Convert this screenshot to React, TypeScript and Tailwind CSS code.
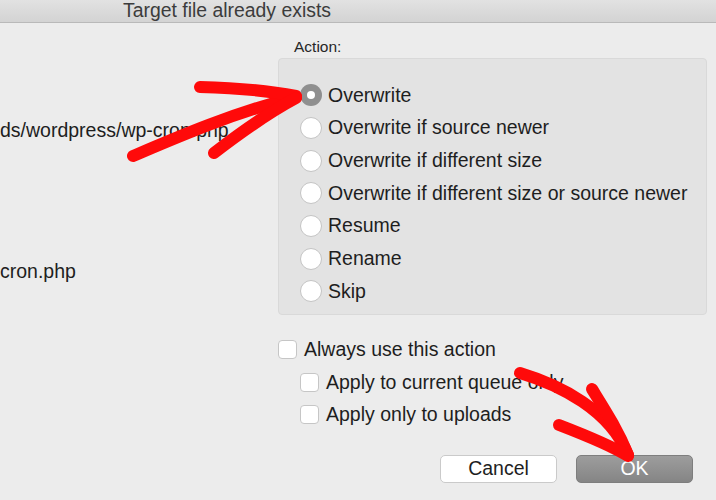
import React from "react";

const OPTIONS = [
  "Overwrite",
  "Overwrite if source newer",
  "Overwrite if different size",
  "Overwrite if different size or source newer",
  "Resume",
  "Rename",
  "Skip",
];

function Radio({ checked }: { checked: boolean }) {
  return checked ? (
    <span className="w-[22px] h-[22px] rounded-full bg-[#8f8f8f] flex items-center justify-center shrink-0">
      <span className="w-[8px] h-[8px] rounded-full bg-white" />
    </span>
  ) : (
    <span className="w-[22px] h-[22px] rounded-full bg-white border border-[#c4c4c4] shrink-0" />
  );
}

function Checkbox() {
  return <span className="w-[19px] h-[19px] rounded-[4px] bg-white border border-[#c6c6c6] shrink-0" />;
}

export default function App() {
  return (
    <div
      className="relative w-[716px] h-[500px] overflow-hidden bg-[#ececec] text-[#1e1e1e]"
      style={{ fontFamily: '"Liberation Sans", Arial, sans-serif' }}
    >
      {/* Title bar */}
      <div className="h-[23px] bg-gradient-to-b from-[#e2e2e2] to-[#d3d3d3] border-b border-[#b9b9b9] pl-[123px] flex items-center">
        <span className="text-[19.4px] leading-none text-[#3c3c3c]">Target file already exists</span>
      </div>

      <div className="flex">
        {/* Left column: file details (cropped) */}
        <div className="w-[278px] shrink-0 flex flex-col text-[19.5px] leading-none">
          <div className="mt-[98px]">ds/wordpress/wp-cron.php</div>
          <div className="mt-[121px]">cron.php</div>
        </div>

        {/* Right column */}
        <div className="w-[429px] flex flex-col">
          <div className="pl-[16px] pt-[16px] h-[35px] text-[15.5px] leading-none text-[#262626]">Action:</div>
          <div className="h-[257px] rounded-[4px] bg-[#e3e3e3] border border-[#d9d9d9] pl-[21px] pt-[20px] flex flex-col">
            {OPTIONS.map((o, i) => (
              <div key={o} className="h-[32.7px] flex items-center gap-[6px]">
                <Radio checked={i === 0} />
                <span className="text-[19.5px] leading-none">{o}</span>
              </div>
            ))}
          </div>

          <div className="mt-[25px] flex items-center gap-[7px] h-[19px]">
            <Checkbox />
            <span className="text-[19.5px] leading-none">Always use this action</span>
          </div>
          <div className="mt-[14px] pl-[22px] flex items-center gap-[7px] h-[19px]">
            <Checkbox />
            <span className="text-[19.5px] leading-none">Apply to current queue only</span>
          </div>
          <div className="mt-[13px] pl-[22px] flex items-center gap-[7px] h-[19px]">
            <Checkbox />
            <span className="text-[19.5px] leading-none">Apply only to uploads</span>
          </div>

          <div className="mt-[31px] pr-[14px] flex justify-end gap-[19px]">
            <button className="w-[117px] h-[28px] rounded-[5px] bg-white border border-[#cacaca] text-[19.5px] leading-none text-[#1e1e1e]">
              Cancel
            </button>
            <button className="w-[117px] h-[28px] rounded-[5px] bg-gradient-to-b from-[#9d9d9d] to-[#858585] border border-[#7e7e7e] text-[19.5px] leading-none text-white">
              OK
            </button>
          </div>
        </div>
      </div>

      {/* Red annotation arrows */}
      <svg className="absolute inset-0 pointer-events-none" width="716" height="500" viewBox="0 0 716 500">
        <g fill="none" stroke="#ff0a0a" strokeWidth="12" strokeLinecap="round" strokeLinejoin="round">
          <path d="M133 156 C 175 138, 235 112, 296 97" />
          <path d="M200 87 C 240 88, 270 91, 296 96" />
          <path d="M214 153 C 240 133, 268 113, 296 98" />
          <path d="M520 373 C 560 385, 610 410, 628 455" />
          <path d="M592 389 C 605 410, 618 430, 628 455" />
          <path d="M559 425 C 585 435, 610 445, 628 456" />
        </g>
      </svg>
    </div>
  );
}
